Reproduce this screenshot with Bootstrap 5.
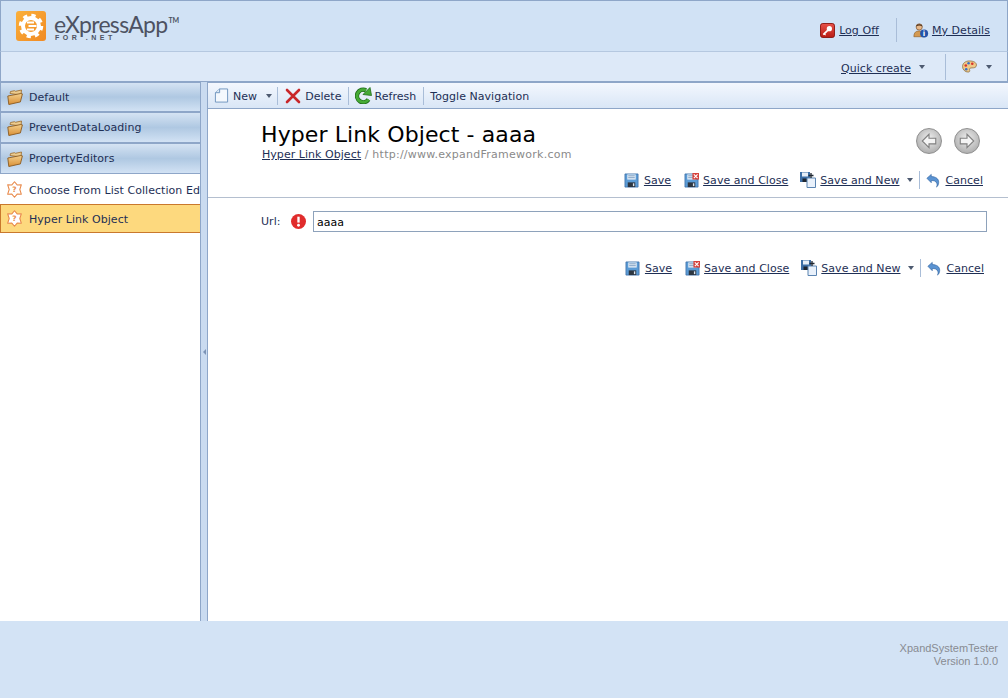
<!DOCTYPE html>
<html lang="en">
<head>
    <meta charset="UTF-8">
    <title>Hyper Link Object - aaaa</title>
    <link href="https://cdn.jsdelivr.net/npm/bootstrap@5.3.0/dist/css/bootstrap.min.css" rel="stylesheet">
    <style>
        html, body { height: 698px; overflow: hidden; }
        body { font-family: "DejaVu Sans", Verdana, sans-serif; font-size: 11px; letter-spacing: .04px; color: #1e2f55; background: #fff; }
        a { color: #1e2f55; }
        .page-shell { width: 1008px; height: 698px; }
        .top-head { height: 52px; background: #d1e2f5; border: 1px solid #8ea6c8; border-bottom: 1px solid #b5c8e0; padding: 0 17px 0 15px; }
        .logo-word { font-family: Lato, sans-serif; font-size: 23px; line-height: 24px; color: #4d5262; letter-spacing: -.7px; }
        .logo-word sup { font-size: 7px; font-weight: 700; top: -10px; letter-spacing: -.2px; margin-left: 1px; }
        .logo-sub { font-family: "Liberation Sans", sans-serif; font-size: 7px; font-weight: 700; line-height: 7px; letter-spacing: 3.5px; color: #4d5262; margin: -2px 0 0 1px; }
        .head-links { margin-top: 8px; }
        .sub-head { height: 30px; background: #dde9f8; border: 1px solid #8ea6c8; border-top: 0; padding-right: 15px; }
        .sep-v { width: 1px; background: #a9bdd8; align-self: center; }
        .sep-24 { height: 24px; }
        .sep-26 { height: 26px; }
        .caret-dn { width: 0; height: 0; border: 3.5px solid transparent; border-top: 4px solid #4d5a70; border-bottom: 0; flex: none; }
        .work-area { height: 539px; }
        .side-nav { width: 200px; flex: none; overflow: hidden; background: #fff; }
        .nav-group { border: 1px solid #8ea6c8; border-right: 0; background: linear-gradient(#d5e3f3, #afc8e2 50%, #d2e2f4); padding-left: 6px; white-space: nowrap; gap: 6px; }
        .nav-h30 { height: 30px; }
        .nav-h31 { height: 31px; }
        .nav-row { height: 30px; padding-left: 6px; white-space: nowrap; gap: 6px; }
        .nav-wide { letter-spacing: .05px; }
        .nav-row-on { height: 29px; background: #fdd97e; border: 1px solid #c9782d; border-right: 0; padding-left: 5px; gap: 6px; }
        .split-bar { width: 8px; flex: none; background: #cadbf0; border-left: 1px solid #8ea6c8; border-right: 1px solid #8ea6c8; }
        .split-arrow { width: 0; height: 0; border: 3px solid transparent; border-right: 3px solid #7c93b5; border-left: 0; }
        .main-col { width: 800px; flex: none; }
        .tool-strip { height: 27px; background: linear-gradient(#f3f7fe, #d9e6f6); border-top: 1px solid #8ea6c8; border-bottom: 1px solid #8ea6c8; padding-left: 6px; }
        .tool-sep { width: 1px; height: 18px; background: #a9bdd8; flex: none; }
        .drop-1 { padding-top: 1px; }
        .drop-2 { padding-top: 2px; }
        .drop-3 { padding-top: 3px; }
        .drop-4 { padding-top: 4px; }
        .drop-5 { padding-top: 5px; }
        .ml-3 { margin-left: 3px; }
        .ml-4 { margin-left: 4px; }
        .ml-5 { margin-left: 5px; }
        .ml-6 { margin-left: 6px; }
        .ml-7 { margin-left: 7px; }
        .ml-8 { margin-left: 8px; }
        .ml-9 { margin-left: 9px; }
        .ml-12 { margin-left: 12px; }
        .ml-13 { margin-left: 13px; }
        .ml-16 { margin-left: 16px; }
        .ml-17 { margin-left: 17px; }
        .ml-20 { margin-left: 20px; }
        .view-head { height: 89px; border-bottom: 1px solid #b4bfcf; padding: 13px 25px 0 53px; }
        .view-title { font-size: 22px; line-height: 26px; color: #000; margin: 0; font-weight: 400; letter-spacing: .1px; }
        .crumb-line { line-height: 14px; padding-left: 1px; color: #8a8a8a; }
        .crumb-url { letter-spacing: .25px; }
        .round-pair { gap: 12px; margin: 6px 3px 0 0; }
        .round-btn { width: 26px; height: 26px; border-radius: 50%; background: radial-gradient(circle at 50% 40%, #f0f0f0, #9c9c9c); border: 1px solid #8f8f8f; }
        .act-row { height: 20px; }
        .act-row a { white-space: nowrap; }
        .act-top { margin-top: 8px; }
        .act-bottom { margin-top: 26px; padding-right: 24px; }
        .url-row { padding: 13px 0 0 53px; }
        .url-label { width: 30px; padding-top: 1px; }
        .url-input { width: 674px; height: 21px; border: 1px solid #8ea2bb; padding: 1px 3px 0; font-size: 11px; color: #000; font-family: inherit; border-radius: 0; outline: 0; margin-left: 7px; }
        .bottom-bar { height: 77px; background: #d3e3f5; padding: 21px 10px 0 0; color: #888b92; font-family: "Liberation Sans", sans-serif; font-size: 11px; line-height: 13px; text-align: right; letter-spacing: 0; }
    </style>
</head>
<body>
<svg width="0" height="0" class="position-absolute">
    <defs>
        <linearGradient id="gr-folder" x1="0" y1="0" x2="0" y2="1"><stop offset="0" stop-color="#f3cf8c"/><stop offset="1" stop-color="#d98f35"/></linearGradient>
        <linearGradient id="gr-red" x1="0" y1="0" x2="0" y2="1"><stop offset="0" stop-color="#e8524a"/><stop offset="1" stop-color="#b81c14"/></linearGradient>
        <linearGradient id="gr-logo" x1="0" y1="0" x2="1" y2="1"><stop offset="0" stop-color="#fbb03b"/><stop offset="1" stop-color="#f08a24"/></linearGradient>
        <symbol id="ic-folder" viewBox="0 0 16 16">
            <path d="M3 4.500L3.500 2.500l4-.8 1 .6 6-1.300L14 6z" fill="#eccb8e" stroke="#9a6a2a" stroke-width=".8"/>
            <path d="M.8 7l13-2.500 1.600.4-2 8-11.600 2.600z" fill="url(#gr-folder)" stroke="#8a5a20" stroke-width=".9"/>
        </symbol>
        <symbol id="ic-page" viewBox="0 0 16 16">
            <path d="M1.500 5L6 1h8.500v14h-13z" fill="#f4f8fd" stroke="#6e93bd"/>
            <path d="M1.500 5H6V1" fill="#dbe8f6" stroke="#6e93bd"/>
        </symbol>
        <symbol id="ic-x" viewBox="0 0 16 16">
            <path d="M2 2l12 12M14 2L2 14" stroke="#c9272a" stroke-width="2.600" fill="none" stroke-linecap="round"/>
        </symbol>
        <symbol id="ic-refresh" viewBox="0 0 17 17">
            <path d="M13.500 12.500A6.300 6.300 0 1 1 11 3.200" fill="none" stroke="#1f6b1a" stroke-width="4.400"/>
            <path d="M13.500 12.500A6.300 6.300 0 1 1 11 3.200" fill="none" stroke="#46ab35" stroke-width="2.800"/>
            <path d="M8 7.500l8.500 1L15 .5z" fill="#46ab35" stroke="#1f6b1a" stroke-width=".8"/>
        </symbol>
        <symbol id="ic-star" viewBox="0 0 16 16">
            <path d="M8 .7l2.500 3 3.900-.1L13 8l1.400 4.400-3.900-.1L8 15.300l-2.500-3-3.900.1L3 8 1.600 3.600l3.900.1z" fill="#fff" stroke="#e8894a" stroke-width="1" stroke-linejoin="round"/>
            <text x="8" y="10.800" text-anchor="middle" font-size="7" font-weight="700" fill="#e8894a" font-family="DejaVu Sans">?</text>
        </symbol>
        <symbol id="ic-save" viewBox="0 0 16 16">
            <path d="M1 1h14v14H1z" fill="#5b9bd5" stroke="#3c6ea5" stroke-width=".8"/>
            <path d="M3.500 1.500h9v5.500h-9z" fill="#e6eef7"/>
            <path d="M4.500 3h7M4.500 5h7" stroke="#7a9cc0"/>
            <path d="M4 10h8v5H4z" fill="#2c3540"/>
            <path d="M9.500 11h1.500v3H9.500z" fill="#dbe4ee"/>
        </symbol>
        <symbol id="ic-saveclose" viewBox="0 0 16 16">
            <use href="#ic-save"/>
            <path d="M9 0h7v7H9z" fill="#d6403a"/>
            <path d="M10.500 1.500l4 4M14.500 1.500l-4 4" stroke="#fff" stroke-width="1.200"/>
        </symbol>
        <symbol id="ic-savenew" viewBox="0 0 16 16">
            <path d="M0 0h10v10H0z" fill="#3c6ea5"/>
            <path d="M2 .5h6v4H2z" fill="#e6eef7"/>
            <path d="M2.500 6.500h5v3.500h-5z" fill="#1f2630"/>
            <path d="M7 6h8.500v9.500H7z" fill="#e9f1fb" stroke="#5b84b1"/>
            <path d="M11 1v5M8.500 3.500h5" stroke="#1f2630" stroke-width="1.300"/>
        </symbol>
        <symbol id="ic-undo" viewBox="0 0 16 16">
            <path d="M1 5.500L6 1v2.500c5 0 8.500 2.500 8.500 6.500 0 2.500-1 4.500-2.500 5.500 .7-1.500 1-3 .3-4.500C11.500 8.800 9 8 6 8v2.500z" fill="#5a93d2" stroke="#2c5f9e" stroke-width=".7"/>
        </symbol>
        <symbol id="ic-logoff" viewBox="0 0 16 16">
            <rect x=".5" y=".5" width="15" height="15" rx="2.500" fill="url(#gr-red)" stroke="#8a1510"/>
            <path d="M3.500 12.500l5-5" stroke="#fff" stroke-width="1.800"/>
            <circle cx="10" cy="6" r="2.800" fill="#fff"/>
            <path d="M4.500 11.500l1.500 1.500" stroke="#fff" stroke-width="1.200"/>
        </symbol>
        <symbol id="ic-user" viewBox="0 0 18 18">
            <path d="M1 16c0-5 2.500-6.500 6-6.500s6 1.500 6 6.500z" fill="#d49a52" stroke="#8a5a20" stroke-width=".7"/>
            <circle cx="7" cy="5" r="3.500" fill="#e8b98a" stroke="#6a4020" stroke-width=".7"/>
            <path d="M3.500 4.500C4 1 10 1 10.500 4.500 8 3 6 3 3.500 4.500z" fill="#4a2e18"/>
            <circle cx="12.500" cy="12.500" r="4.500" fill="#2352a8"/>
            <text x="12.500" y="15.500" text-anchor="middle" font-size="8" font-weight="700" fill="#fff" font-family="DejaVu Sans">i</text>
        </symbol>
        <symbol id="ic-palette" viewBox="0 0 16 14">
            <path d="M8 1C3.500 1 .5 3.500 .5 7s3 6 6 6c2 0 2-1.500 1.500-2.500S8.500 8.500 10.500 8.500s5 0 5-3C15.500 2.500 12 1 8 1z" fill="#efc987" stroke="#8a6a3a" stroke-width=".8"/>
            <circle cx="4" cy="6" r="1.400" fill="#d8352a"/>
            <circle cx="7" cy="3.500" r="1.400" fill="#3a6fc9"/>
            <circle cx="11" cy="4" r="1.400" fill="#d8352a"/>
            <circle cx="4.500" cy="10" r="1.400" fill="#3a6fc9"/>
        </symbol>
    </defs>
</svg>

<div class="page-shell d-flex flex-column">
    <div class="top-head d-flex align-items-center justify-content-between">
        <div class="d-flex align-items-center gap-2">
            <svg width="30" height="30" viewBox="0 0 30 30">
                <rect width="30" height="30" rx="3" fill="url(#gr-logo)"/>
                <circle cx="15" cy="15" r="8" fill="none" stroke="#fff" stroke-width="4"/>
                <circle cx="15" cy="15" r="10.500" fill="none" stroke="#fff" stroke-width="3.500" stroke-dasharray="4.200 4.050"/>
                <path d="M11 11.500h7M12.500 15h8M11 18.500h7" stroke="#fff" stroke-width="1.800"/>
            </svg>
            <div>
                <div class="logo-word">eXpressApp<sup>TM</sup></div>
                <div class="logo-sub">FOR .NET</div>
            </div>
        </div>
        <div class="head-links d-flex align-items-center">
            <svg width="15" height="15"><use href="#ic-logoff"/></svg>
            <a href="#" class="ml-4 drop-2">Log Off</a>
            <span class="sep-v sep-24 ml-17"></span>
            <svg width="16" height="17" class="ml-16"><use href="#ic-user"/></svg>
            <a href="#" class="ml-3 drop-2">My Details</a>
        </div>
    </div>
    <div class="sub-head d-flex align-items-center justify-content-end">
        <a href="#" class="drop-5">Quick create</a>
        <span class="caret-dn ml-8"></span>
        <span class="sep-v sep-26 ml-20"></span>
        <svg width="15" height="13" class="ml-16"><use href="#ic-palette"/></svg>
        <span class="caret-dn ml-9"></span>
    </div>
    <div class="work-area d-flex">
        <div class="side-nav">
            <div class="nav-group nav-h30 d-flex align-items-center"><svg width="16" height="16"><use href="#ic-folder"/></svg><span class="drop-2">Default</span></div>
            <div class="nav-group nav-h31 d-flex align-items-center"><svg width="16" height="16"><use href="#ic-folder"/></svg><span class="drop-1">PreventDataLoading</span></div>
            <div class="nav-group nav-h31 d-flex align-items-center"><svg width="16" height="16"><use href="#ic-folder"/></svg><span class="drop-1">PropertyEditors</span></div>
            <div class="nav-row d-flex align-items-center"><svg width="17" height="17" class="flex-shrink-0"><use href="#ic-star"/></svg><span class="nav-wide drop-4">Choose From List Collection Editor</span></div>
            <div class="nav-row-on d-flex align-items-center"><svg width="17" height="17"><use href="#ic-star"/></svg><span class="drop-3">Hyper Link Object</span></div>
        </div>
        <div class="split-bar d-flex align-items-center justify-content-center"><div class="split-arrow"></div></div>
        <div class="main-col">
            <div class="tool-strip d-flex align-items-center">
                <svg width="15" height="15"><use href="#ic-page"/></svg>
                <span class="ml-4 drop-4">New</span>
                <span class="caret-dn ml-9"></span>
                <span class="tool-sep ml-5"></span>
                <svg width="16" height="16" class="ml-7"><use href="#ic-x"/></svg>
                <span class="ml-4 drop-4">Delete</span>
                <span class="tool-sep ml-6"></span>
                <svg width="17" height="17" class="ml-6"><use href="#ic-refresh"/></svg>
                <span class="ml-3 drop-4">Refresh</span>
                <span class="tool-sep ml-7"></span>
                <span class="ml-6 drop-4">Toggle Navigation</span>
            </div>
            <div class="view-head">
                <div class="d-flex justify-content-between align-items-start">
                    <div>
                        <h1 class="view-title">Hyper Link Object - aaaa</h1>
                        <div class="crumb-line"><a href="#">Hyper Link Object</a> <span class="crumb-url">/ http://www.expandFramework.com</span></div>
                    </div>
                    <div class="round-pair d-flex">
                        <span class="round-btn d-flex align-items-center justify-content-center"><svg width="18" height="18" viewBox="0 0 16 16"><path d="M8 2L2 8l6 6v-3.500h6v-5H8z" fill="#f4f4f4" stroke="#808080"/></svg></span>
                        <span class="round-btn d-flex align-items-center justify-content-center"><svg width="18" height="18" viewBox="0 0 16 16"><path d="M8 2l6 6-6 6v-3.500H2v-5h6z" fill="#f4f4f4" stroke="#808080"/></svg></span>
                    </div>
                </div>
                <div class="act-row act-top d-flex align-items-center justify-content-end">
                    <svg width="15" height="15"><use href="#ic-save"/></svg><a href="#" class="ml-5 drop-2">Save</a>
                    <svg width="15" height="15" class="ml-13"><use href="#ic-saveclose"/></svg><a href="#" class="ml-4 drop-2">Save and Close</a>
                    <svg width="16" height="16" class="ml-12"><use href="#ic-savenew"/></svg><a href="#" class="ml-4 drop-2">Save and New</a>
                    <span class="caret-dn ml-8"></span>
                    <span class="tool-sep ml-6"></span>
                    <svg width="14" height="15" class="ml-6"><use href="#ic-undo"/></svg><a href="#" class="ml-5 drop-2">Cancel</a>
                </div>
            </div>
            <div class="url-row d-flex align-items-center">
                <span class="url-label">Url:</span>
                <svg width="15" height="15" viewBox="0 0 14 14"><circle cx="7" cy="7" r="7" fill="#e02c2c"/><path d="M7 2.500v5.500" stroke="#fff" stroke-width="2.200"/><circle cx="7" cy="10.500" r="1.300" fill="#fff"/></svg>
                <input class="url-input" type="text" value="aaaa">
            </div>
            <div class="act-row act-bottom d-flex align-items-center justify-content-end">
                <svg width="15" height="15"><use href="#ic-save"/></svg><a href="#" class="ml-5 drop-2">Save</a>
                <svg width="15" height="15" class="ml-13"><use href="#ic-saveclose"/></svg><a href="#" class="ml-4 drop-2">Save and Close</a>
                <svg width="16" height="16" class="ml-12"><use href="#ic-savenew"/></svg><a href="#" class="ml-4 drop-2">Save and New</a>
                <span class="caret-dn ml-8"></span>
                <span class="tool-sep ml-6"></span>
                <svg width="14" height="15" class="ml-6"><use href="#ic-undo"/></svg><a href="#" class="ml-5 drop-2">Cancel</a>
            </div>
        </div>
    </div>
    <div class="bottom-bar">XpandSystemTester<br>Version 1.0.0</div>
</div>
<script src="https://cdn.jsdelivr.net/npm/bootstrap@5.3.0/dist/js/bootstrap.bundle.min.js"></script>
</body>
</html>
